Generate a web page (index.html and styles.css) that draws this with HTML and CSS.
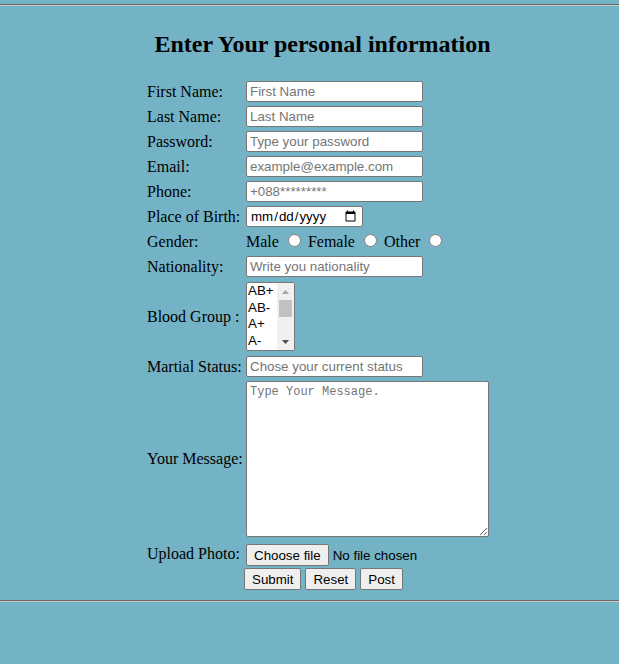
FILE: index.html
```html
<!DOCTYPE html>
<html lang="en">
<head>
<meta charset="utf-8">
<title>Personal information</title>
<link rel="stylesheet" href="styles.css">
</head>
<body>
<hr class="rule rule-top">
<div class="wrap">
  <h2 class="title">Enter Your personal information</h2>
  <form class="form">
    <table class="info">
      <tr><td class="label">First Name:</td><td class="ctl"><input class="field" type="text" placeholder="First Name"></td></tr>
      <tr><td class="label">Last Name:</td><td class="ctl"><input class="field" type="text" placeholder="Last Name"></td></tr>
      <tr><td class="label">Password:</td><td class="ctl"><input class="field" type="password" placeholder="Type your password"></td></tr>
      <tr><td class="label">Email:</td><td class="ctl"><input class="field" type="email" placeholder="example@example.com"></td></tr>
      <tr><td class="label">Phone:</td><td class="ctl"><input class="field" type="tel" placeholder="+088*********"></td></tr>
      <tr><td class="label">Place of Birth:</td><td class="ctl"><input class="date" type="date"></td></tr>
      <tr><td class="label">Gender:</td><td class="ctl gender">Male <input class="radio" type="radio" name="gender"> Female <input class="radio" type="radio" name="gender"> Other <input class="radio" type="radio" name="gender"></td></tr>
      <tr><td class="label">Nationality:</td><td class="ctl"><input class="field" type="text" placeholder="Write you nationality"></td></tr>
      <tr><td class="label">Blood Group :</td><td class="ctl">
        <div class="listbox" role="listbox" aria-label="Blood Group">
          <div class="opts">
            <div class="opt" role="option">AB+</div>
            <div class="opt" role="option">AB-</div>
            <div class="opt" role="option">A+</div>
            <div class="opt" role="option">A-</div>
            <div class="opt" role="option">B+</div>
            <div class="opt" role="option">B-</div>
            <div class="opt" role="option">O+</div>
            <div class="opt" role="option">O-</div>
          </div>
          <div class="sbar">
            <span class="sarrow"><svg width="7" height="4" viewBox="0 0 7 4"><polygon points="0,4 7,4 3.5,0" fill="#a3a3a3"/></svg></span>
            <span class="thumb"></span>
            <span class="strack"></span>
            <span class="sarrow"><svg width="7" height="4" viewBox="0 0 7 4"><polygon points="0,0 7,0 3.5,4" fill="#505050"/></svg></span>
          </div>
        </div>
      </td></tr>
      <tr><td class="label">Martial Status:</td><td class="ctl"><input class="field" type="text" placeholder="Chose your current status"></td></tr>
      <tr><td class="label">Your Message:</td><td class="ctl"><textarea class="message" placeholder="Type Your Message."></textarea></td></tr>
      <tr><td class="label">Upload Photo:</td><td class="ctl"><div class="upload"><button class="btn" type="button">Choose file</button><span class="file-status">No file chosen</span></div></td></tr>
    </table>
    <div class="actions"><button class="btn" type="submit">Submit</button><button class="btn" type="reset">Reset</button><button class="btn" type="button">Post</button></div>
  </form>
</div>
<hr class="rule rule-bottom">
</body>
</html>
```
FILE: styles.css
```css
html, body {
  margin: 0;
  padding: 0;
}
body {
  background: #74b3c6;
  font-family: "Liberation Serif", "Times New Roman", serif;
  font-size: 16px;
  color: #000;
}
.rule {
  margin: 0;
  height: 0;
  border: 0;
  border-top: 1px solid #6a6a6a;
  border-bottom: 1px solid #c8c8c8;
}
.rule-top {
  margin-top: 4px;
}
.rule-bottom {
  margin-top: 10px;
}
.wrap {
  margin-left: 144px;
  width: 357px;
  padding-top: 1px;
}
.title {
  font-size: 24px;
  font-weight: bold;
  text-align: center;
  margin: 24px 0 20px;
}
.form {
  margin: 0;
}
.info {
  border-spacing: 2px;
  table-layout: fixed;
  width: 348px;
}
.info td {
  padding: 1px;
  vertical-align: middle;
}
.info .label {
  width: 95px;
  white-space: nowrap;
}
.info .ctl {
  width: 243px;
}
.gender {
  white-space: nowrap;
  line-height: 21px;
}
input, select, button, textarea {
  font-family: "Liberation Sans", Arial, sans-serif;
  font-size: 13.333px;
}
.field {
  display: block;
  width: 177px;
  height: 21px;
  box-sizing: border-box;
  padding: 1px 3px;
  border: 1px solid #767676;
  border-radius: 2px;
  background: #fff;
  margin: 0;
}
.field::placeholder {
  color: #757575;
}
.date {
  display: block;
  width: 117px;
  height: 21px;
  box-sizing: border-box;
  border: 1px solid #767676;
  border-radius: 2px;
  margin: 0;
  padding: 1px 3px;
  background: #fff;
}
.radio {
  margin: 3px 3px 0 5px;
}
.listbox {
  display: flex;
  width: 49px;
  height: 69px;
  box-sizing: border-box;
  border: 1px solid #767676;
  border-radius: 2px;
  background: #fff;
  margin: 1px 0;
  overflow: hidden;
}
.opts {
  flex: 1;
  overflow: hidden;
  font-family: "Liberation Sans", Arial, sans-serif;
  font-size: 13.333px;
  padding-left: 1px;
}
.opt {
  height: 16.67px;
  line-height: 16.67px;
  white-space: nowrap;
}
.sbar {
  width: 17px;
  display: flex;
  flex-direction: column;
  background: #f0f0f0;
}
.sarrow {
  height: 17px;
  display: flex;
  align-items: center;
  justify-content: center;
  flex: none;
}
.thumb {
  height: 17px;
  margin: 0 2px;
  background: #c1c1c1;
  flex: none;
}
.strack {
  flex: 1;
}
.message {
  display: block;
  font-family: "Liberation Mono", "Courier New", monospace;
  font-size: 12px;
  width: 243px;
  height: 156px;
  box-sizing: border-box;
  border: 1px solid #767676;
  border-radius: 2px;
  padding: 3px 3px 2px;
  margin: 0;
  background: #fff;
}
.message::placeholder {
  color: #757575;
}
.upload {
  display: flex;
  align-items: center;
  height: 25px;
  padding-top: 3px;
  box-sizing: border-box;
  white-space: nowrap;
}
.file-status {
  font-family: "Liberation Sans", Arial, sans-serif;
  font-size: 13.333px;
  margin-left: 4px;
}
.actions {
  display: flex;
  justify-content: center;
  gap: 4px;
  padding-left: 2px;
  margin-top: -1px;
}
.btn {
  font-family: "Liberation Sans", Arial, sans-serif;
  font-size: 13.333px;
  background: #efefef;
  border: 1px solid #767676;
  border-radius: 2px;
  padding: 1px 7px;
  height: 22px;
  color: #000;
  margin: 0;
}
```
